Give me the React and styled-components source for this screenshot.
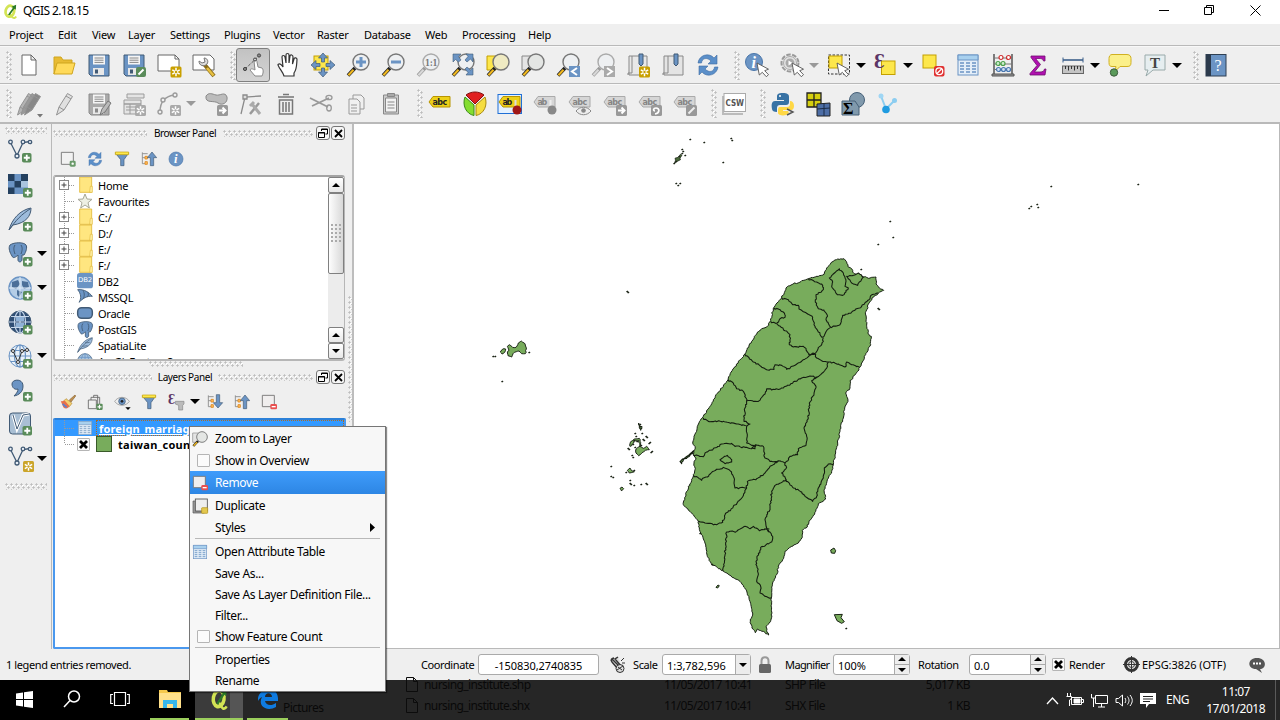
import React from "react";
import styled, { createGlobalStyle, css } from "styled-components";

const GlobalStyle = createGlobalStyle`
  * { box-sizing: border-box; }
  body { margin: 0; overflow: hidden; }
  svg { display: block; flex: none; overflow: visible; }
`;

const ui = `"Noto Sans", "Open Sans", sans-serif`;

/* ---------- shell ---------- */
const Desktop = styled.div`
  position: relative;
  display: flex;
  flex-direction: column;
  width: 1280px;
  height: 720px;
  overflow: hidden;
  background: #efefef;
  color: #000;
  font: 11px/16px ${ui};
  white-space: nowrap;
`;
const TitleBar = styled.header`
  display: flex;
  align-items: center;
  height: 24px;
  padding: 0 2px 0 3px;
  background: #fff;
  font-size: 12px;
  letter-spacing: -0.6px;
`;
const AppName = styled.span`flex: 1; padding: 0 0 1px 5px;`;
const WindowButton = styled.span`
  display: flex;
  justify-content: center;
  width: 45.5px;
  padding-bottom: 3px;
`;
const MenuBar = styled.nav`
  display: flex;
  align-items: center;
  height: 22px;
  padding: 1px 0 0 9px;
  border-bottom: 1px solid #b9b9b9;
  letter-spacing: -0.25px;
`;
const MenuName = styled.span`width: ${(p) => p.$w}px;`;

const dotsV = css`
  background-image: radial-gradient(circle at 1.5px 1.5px, #bdbdbd 0.9px, transparent 1.3px),
    radial-gradient(circle at 4.5px 3.5px, #bdbdbd 0.9px, transparent 1.3px),
    radial-gradient(circle at 2.5px 2.5px, #fff 0.9px, transparent 1.3px);
  background-size: 6px 5px;
`;
const dotsH = css`
  background-image: radial-gradient(circle at 1.5px 1.5px, #bdbdbd 0.9px, transparent 1.3px),
    radial-gradient(circle at 3.5px 4.5px, #bdbdbd 0.9px, transparent 1.3px),
    radial-gradient(circle at 2.5px 2.5px, #fff 0.9px, transparent 1.3px);
  background-size: 5px 6px;
`;
const ToolBar = styled.div`
  display: flex;
  align-items: center;
  height: ${(p) => p.$h}px;
  border-bottom: ${(p) => p.$line || 1}px solid #b9b9b9;
  border-top: 1px solid #f8f8f8;
`;
const Handle = styled.span`
  align-self: center;
  width: ${(p) => p.$w}px;
  height: 29px;
  background-clip: content-box;
  background-origin: content-box;
  padding-left: ${(p) => p.$w - 6}px;
  ${dotsV}
`;
const ToolSlot = styled.span`
  display: flex;
  align-items: center;
  justify-content: center;
  width: 35px;
  height: 34px;
  padding-right: 1px;
`;
const Pressed = styled.span`
  display: flex;
  align-items: center;
  justify-content: center;
  width: 34px;
  height: 34px;
  border: 1px solid #7f7f7f;
  border-radius: 3px;
  background: linear-gradient(#c2c2c2, #d4d4d4);
`;
const ArrowSlot = styled.span`
  display: flex;
  justify-content: center;
  width: ${(p) => p.$w || 12}px;
  padding-right: ${(p) => (p.$w ? 1 : 4)}px;
`;
const Triangle = styled.i`
  flex: none;
  width: 0;
  height: 0;
  border: ${(p) => p.$s || 5}px solid transparent;
  border-top: ${(p) => p.$s || 5}px solid ${(p) => p.$c || "#000"};
  border-bottom: 0;
  ${(p) => p.$up && css`border-top: 0; border-bottom: ${p.$s || 5}px solid #000;`}
`;

/* ---------- body ---------- */
const Body = styled.div`display: flex; height: 525px;`;
const SideBar = styled.aside`
  display: flex;
  flex-direction: column;
  width: 52px;
  padding-top: 3px;
  border-right: 1px solid #b9b9b9;
`;
const SideHandle = styled.span`
  width: 42px;
  height: 7px;
  margin: ${(p) => p.$gap || 0}px 0 0 5px;
  ${dotsH}
`;
const SideTool = styled.span`
  display: flex;
  align-items: center;
  height: 34.1px;
  padding-left: 8px;
  gap: 5px;
`;
const Dock = styled.section`
  display: flex;
  flex-direction: column;
  width: 295px;
  padding: 1px 0 0 1px;
`;
const Splitter = styled.div`
  width: 7px;
  border-right: 2px solid #bdbdbd;
  padding: 172px 0 0 1px;
  &::before { content: ""; display: block; height: 126px; width: 4px; ${dotsV} }
`;
const PanelTitle = styled.div`
  display: flex;
  align-items: center;
  height: 16px;
  font-size: 10px;
  letter-spacing: -0.4px;
`;
const TitleDots = styled.span`
  width: ${(p) => p.$w}px;
  height: 7px;
  ${dotsH}
`;
const TitleText = styled.span`width: ${(p) => p.$w}px; text-align: center;`;
const PanelButton = styled.span`
  display: flex;
  align-items: center;
  justify-content: center;
  width: 14px;
  height: 14px;
  margin-left: ${(p) => p.$gap || 0}px;
  border: 1px solid #777;
  border-radius: 3px;
  background: #f6f6f6;
`;
const PanelTools = styled.div`
  display: flex;
  align-items: center;
  height: ${(p) => p.$h}px;
  padding: ${(p) => p.$pt || 0}px 0 0 7px;
  gap: 11px;
`;
const BrowserFrame = styled.div`
  display: flex;
  width: 292px;
  height: 186px;
  border: 2px solid #b6b6b6;
  border-top-color: #a4a4a4;
  border-right-width: 1px;
  border-radius: 3px;
  background: #fff;
`;
const Tree = styled.div`
  flex: 1;
  overflow: hidden;
`;
const TreeRow = styled.div`
  display: flex;
  align-items: center;
  height: 16px;
  letter-spacing: -0.25px;
  & > span { padding: 2px 0 0 5px; }
`;
const ScrollBar = styled.div`
  display: flex;
  flex-direction: column;
  width: 16px;
  background: #ececec;
`;
const ScrollButton = styled.span`
  display: flex;
  align-items: center;
  justify-content: center;
  height: 16px;
  border: 1px solid #808080;
  border-radius: 2px;
  background: linear-gradient(#fff, #e8e8e8);
`;
const Thumb = styled.span`
  display: flex;
  align-items: center;
  justify-content: center;
  height: 81px;
  border: 1px solid #808080;
  border-radius: 2px;
  background: linear-gradient(90deg, #fdfdfd, #d8d8d8);
  margin-bottom: auto;
`;
const Grip = styled.i`
  width: 11px;
  height: 19px;
  background: radial-gradient(circle at 1px 1px, #aaa 0.8px, transparent 1.2px);
  background-size: 4px 4px;
`;
const MidHandle = styled.span`
  width: 94px;
  height: 6px;
  margin: 0 0 2px 96px;
  ${dotsH}
`;
const LayersFrame = styled.div`
  width: 293px;
  height: 231px;
  border: 2px solid #4a98ee;
  border-top-color: #2b80d8;
  border-radius: 2px;
  background: #fff;
`;
const LayerRow = styled.div`
  display: flex;
  align-items: center;
  height: 16px;
  font-weight: bold;
  font-size: 11px;
  letter-spacing: ${(p) => p.$ls || 0}px;
  ${(p) => p.$on && css`background: #3399ff; color: #fff;`}
`;
const LayerName = styled.span`
  flex: 1;
  height: 16px;
  line-height: 18px;
  margin-left: ${(p) => p.$ml}px;
  padding-left: 2px;
  text-decoration: ${(p) => (p.$u ? "underline" : "none")};
  ${(p) => p.$u && css`border: 1px dotted #b06a20; line-height: 16px;`}
`;
const CheckBox = styled.span`
  display: flex;
  flex: none;
  align-items: center;
  justify-content: center;
  width: 13px;
  height: 13px;
  border: 1px solid #b5b5b5;
  border-radius: 1px;
  background: #fbfbfb;
`;
const Swatch = styled.span`
  width: 16px;
  height: 16px;
  margin-left: 6px;
  border: 1px solid #3a5a2a;
  background: #78ac5c;
`;
const Canvas = styled.main`
  flex: 1;
  background: #fff;
  border: solid #b9b9b9;
  border-width: 0 1px 1px 0;
  overflow: hidden;
`;

/* ---------- status bar ---------- */
const StatusBar = styled.footer`
  display: flex;
  align-items: center;
  height: 31px;
  padding-left: 6px;
`;
const StatusText = styled.span`width: ${(p) => p.$w}px; letter-spacing: ${(p) => p.$ls || -0.4}px;`;
const Field = styled.span`
  display: flex;
  align-items: stretch;
  width: ${(p) => p.$w}px;
  height: 21px;
  margin-right: ${(p) => p.$gap}px;
  border: 1px solid #aaa;
  border-radius: 3px;
  background: #fff;
  line-height: 21px;
  letter-spacing: -0.05px;
  & > span:first-child { flex: 1; padding-left: ${(p) => (p.$align ? 0 : 4)}px; text-align: ${(p) => p.$align || "left"}; }
`;
const FieldButton = styled.span`
  display: flex;
  flex-direction: column;
  align-items: center;
  justify-content: ${(p) => (p.$spin ? "space-between" : "center")};
  width: 15px;
  padding: 2px 0;
  border-left: 1px solid #aaa;
  background: ${(p) => (p.$spin ? "linear-gradient(#eee 47%, #aaa 47%, #aaa 53%, #eee 53%)" : "#ececec")};
`;
const StatusIcon = styled.span`display: flex; justify-content: center; width: ${(p) => p.$w}px;`;

/* ---------- task bar ---------- */
const TaskBar = styled.footer`
  display: flex;
  height: 40px;
  background: #000;
  color: #fff;
`;
const TaskButton = styled.span`
  display: flex;
  flex: none;
  align-items: center;
  justify-content: center;
  width: ${(p) => p.$w}px;
  height: 40px;
  background: ${(p) => p.$bg || "transparent"};
  border-bottom: 2px solid ${(p) => p.$line || "transparent"};
`;
const TaskGlass = styled.div`
  display: flex;
  flex: 1;
  background: #262626;
  margin-left: -1px;
`;
const Ghost = styled.div`
  display: flex;
  flex: none;
  flex-direction: column;
  width: ${(p) => p.$w}px;
  height: 46px;
  margin-top: ${(p) => p.$mt || 0}px;
  margin-left: ${(p) => p.$ml || 0}px;
  padding-top: ${(p) => p.$pt || 0}px;
  color: #090909;
  font-size: 12px;
  line-height: 21px;
  letter-spacing: -0.6px;
`;
const GhostLine = styled.span`display: flex; align-items: center; justify-content: ${(p) => (p.$end ? "flex-end" : "flex-start")}; gap: 6px; height: 21px; flex: none;`;
const Tray = styled.div`
  display: flex;
  align-items: center;
  margin-left: auto;
  gap: 7px;
  font-size: 12px;
  letter-spacing: -0.5px;
`;
const Clock = styled.span`
  width: 72px;
  padding-right: 3px;
  text-align: right;
  line-height: 17px;
  & > b { display: block; font-weight: normal; padding-right: 15px; }
`;
const ShowDesktop = styled.span`width: 5px; height: 40px; border-left: 1px solid #5a5a5a;`;

/* ---------- context menu ---------- */
const ContextMenu = styled.div`
  position: absolute;
  left: 189px;
  top: 426px;
  width: 197px;
  height: 266px;
  padding-top: 1px;
  border: 1px solid #767676;
  background: #f7f7f7;
  box-shadow: 1px 1px 1px rgba(0, 0, 0, 0.45);
  font-size: 12px;
  letter-spacing: -0.36px;
`;
const MenuItem = styled.div`
  display: flex;
  align-items: center;
  height: ${(p) => p.$h}px;
  padding-right: 10px;
  ${(p) => p.$on && css`background: linear-gradient(#3f9cfb, #2d86e4); color: #fff;`}
`;
const MenuIcon = styled.span`display: flex; width: 25px; padding-left: ${(p) => p.$pl || 2}px;`;
const MenuLabel = styled.span`flex: 1;`;
const Separator = styled.div`
  height: 1px;
  margin: 0 5px;
  background: #b9b9b9;
`;

/* ---------- icon drawing ---------- */
const B = "#6b94c4", BD = "#415a75", Y = "#fde74c", YD = "#c4a000", G = "#9b9b9b";

const Plus = ({ x = 14, y = 14 }) => (
  <g transform={`translate(${x} ${y})`}>
    <rect width="9.5" height="9.5" rx="1.8" fill="#5a8c5a" />
    <path d="M4.75 1.8v6M1.8 4.75h6" stroke="#fff" strokeWidth="1.8" />
  </g>
);
const Star = ({ c = "#c9a000", x = 13, y = 13 }) => (
  <g transform={`translate(${x} ${y})`}>
    <rect width="11" height="11" rx="1.5" fill={c} />
    <path d="M5.5 1.3v8.4M1.8 3.4l7.4 4.2M1.8 7.6l7.4-4.2" stroke="#fff" strokeWidth="1.5" />
    <circle cx="5.5" cy="5.5" r="1.2" fill={c} />
  </g>
);
const Lens = ({ gray, fill = "#eef0f2", children }) => (
  <g>
    <path d="M9 15L2 22.5" stroke={gray ? "#999" : "#222"} strokeWidth="3.6" />
    <path d="M7.5 16.8L2.4 22.2" stroke={gray ? "#d8d8d8" : "#f0b820"} strokeWidth="2.2" />
    <circle cx="15" cy="9" r="8" fill={fill} stroke={gray ? "#aaa" : "#777"} strokeWidth="1.4" />
    {children}
  </g>
);
const Cursor = ({ x = 12, y = 10 }) => (
  <path transform={`translate(${x} ${y})`} d="M0 0l2.3 12 3-2.7 4 4.4 2.2-2-3.8-4 3.8-1.5z" fill="#fff" stroke="#555" strokeWidth=".9" />
);
const Tag = ({ on, text = "abc", children }) => (
  <g>
    <path d="M1 10l4-5.500h17v10.500H5z" fill={on ? "#edd018" : "#d6d6d6"} stroke={on ? "#b89500" : "#aaa"} />
    <text x="4.500" y="13" fontFamily="DejaVu Sans" fontWeight="bold" fontSize="8" textLength={text.length * 4.9} fill={on ? "#222" : "#858585"}>{text}</text>
    {children}
  </g>
);
const Floppy = ({ c = B, d = BD }) => (
  <g>
    <path d="M2 2h20v21H4l-2-2z" fill={c} stroke={d} />
    <path d="M6 2.500h12v9H6z" fill="#f5f5f5" />
    <path d="M7.500 5h9M7.500 7.200h9M7.500 9.400h9" stroke="#888" />
    <path d="M6 15h11v7H6z" fill="#e8e8e8" /><path d="M8 16.500h3v4H8z" fill={d} />
  </g>
);
const GrayBadge = ({ children }) => (<g><rect x="13" y="13" width="11" height="11" rx="1.500" fill="#999" />{children}</g>);
const Vee = () => (
  <g fill="none" stroke={BD} strokeWidth="1.300">
    <path d="M2.500 3.500L9 16.500 15 3.500l7-1" />
    <g fill="#e8eef5"><circle cx="2.500" cy="3" r="1.800" /><circle cx="9" cy="17" r="2" /><circle cx="15" cy="3" r="1.800" /><circle cx="22" cy="3" r="1.700" /></g>
  </g>
);
const Elephant = () => (
  <g fill={B} stroke={BD}>
    <path d="M2 3c4-3 14-3 16 0 1.500 2 0 7-2 10l-2 0v5c-1 3-4 2-4 0v-5c-2 2-5 4-6 1C2 11 0 6 2 3z" />
    <path d="M7 3c-2 3-1 6 0 9M13 3c2 3 1 6 0 9" fill="none" />
  </g>
);
const Globe = ({ dark, light }) => (
  <g>
    <circle cx="12" cy="12" r="11" fill={dark ? "#2e4d74" : light ? "#eaf1f8" : "#a9c4df"} stroke={light ? B : BD} />
    <g fill="none" stroke={dark ? "#c5d6ea" : B} strokeWidth="1.200"><ellipse cx="12" cy="12" rx="5.500" ry="11" /><path d="M1 12h22M3 6.500h18M3 17.500h18M12 1v22" /></g>
    {dark && <path d="M8 7h8v4H8zM8 13h8v4H8z" fill="#8fb1d6" />}
  </g>
);
const Sync = () => (
  <g fill="#5b8fc9" stroke="#3f6da3" strokeWidth=".6">
    <path d="M2 10C3 2 13-1 18 5l3-3v9h-9l3-3C11 4 6 5 5.500 10z" />
    <path d="M22 14c-1 8-11 11-16 5l-3 3v-9h9l-3 3c4 4 9 3 9.500-2z" />
  </g>
);
const Arr = ({ down }) => <path d={down ? "M14 1h5v12h4.500L16.500 21 9.500 13H14z" : "M14 22h5V10h4.500L16.500 1.500 9.500 10H14z"} fill={B} stroke={BD} />;
const TreeLines = () => (<g fill="none" stroke="#888" strokeWidth="1.300"><path d="M2 2v17h6M2 4h8M2 10h5" /><g fill="#ffc060" stroke="#e08a20"><path d="M6 8h3.500v4H6zM6 16h3.500v4H6z" /></g></g>);
const Table = ({ c = B }) => (
  <g><rect x="2" y="2" width="20" height="20" fill="#e4eef8" stroke={c} /><path d="M2 2h20v5H2z" fill="#a8d0ee" stroke={c} />
    <path d="M4 10h4M10 10h4M16 10h4M4 13h4M10 13h4M16 13h4M4 16h4M10 16h4M16 16h4M4 19h4M10 19h4M16 19h4" stroke={c} strokeWidth="1.300" /></g>
);
const Eps = () => <text x="0" y="14.500" fontFamily="DejaVu Serif" fontWeight="bold" fontSize="18" textLength="11" lengthAdjust="spacingAndGlyphs" fill="#5c3566">Ɛ</text>;
const QLogo = () => (
  <g>
    <ellipse cx="11" cy="11.500" rx="6.800" ry="8.800" fill="none" stroke="#d3e455" strokeWidth="4.400" transform="rotate(12 11 11.500)" />
    <path d="M10 15c3 1 4 6 6 7 2 1 4 0 5-2" fill="none" stroke="#d3e455" strokeWidth="3" />
    <path d="M8 17l8-11-2.500-1.500L21 1l-.5 8-2.200-1.600L10.500 18z" fill="#2b7a28" />
  </g>
);
const Pencil = ({ c = "#aaa", x = 0 }) => <path transform={`translate(${x} 0)`} d="M1.500 23L4 15 12.500 1.500l5 3L9 18zM4 15l5 3M11 4l5 3" fill={c} stroke="#939393" />;

const art = {
  q: <QLogo />,
  new: <path d="M5 2h9l5 5v15H5zM14 2v5h5" fill="#fff" stroke="#666" />,
  open: <g stroke="#cfa51e"><path d="M2 21V4h7l2 3h9v4H6z" fill="#e8bb33" /><path d="M2 21l3-11h18l-3 11z" fill="#ffda5a" /></g>,
  save: <Floppy />,
  saveas: <g><Floppy /><rect x="14" y="14" width="10" height="10" rx="2" fill="#5a8c5a" /><path d="M16.500 21.500l5-5" stroke="#fff" strokeWidth="2" /></g>,
  composer: <g><path d="M1 2h17l4 4v12H1z" fill="#fff" stroke="#666" /><path d="M18 2v4h4" fill="none" stroke="#666" /><Star x="13.500" y="13.500" /></g>,
  manager: <g><path d="M1 2h17l4 4v11H1z" fill="#fff" stroke="#666" /><path d="M12 11l10 12" stroke="#8a6d1a" strokeWidth="4" /><path d="M15 15l6.500 7.500" stroke="#e8c040" strokeWidth="2.500" /><path d="M7 8c0 5 5 6 8 3 2-3 0-6-3-6l1 4-3 1z" fill="#ddd" stroke="#777" /></g>,
  touch: <g><path d="M4 16L19 2" stroke="#555" strokeDasharray="3 1.500" /><path d="M13 8c1-2 3-1 3 1l1 5 4 1c2 2 1 6 0 8h-7l-5-6c1-2 3-1 5 0z" fill="#fff" stroke="#888" /><circle cx="18" cy="2.500" r="1.600" fill="#888" stroke="#444" /><circle cx="14" cy="6.500" r="1.500" fill="#ccc" stroke="#444" /><circle cx="4" cy="16" r="1.600" fill="#888" stroke="#444" /></g>,
  hand: <path d="M8 23C7 19 2 14 2 11.500c2-1.500 4 .5 5 2.500L6 4c0-2 2.500-2 3 0l1 6V2c0-2 3-2 3 0v8l1-7c.5-2 3-1 3 1l-.5 7 1.500-5c.5-2 3-1 3 .5C20.500 12 21 16 18 20v3z" fill="#fff" stroke="#333" strokeWidth="1.200" />,
  pansel: <g><rect x="3" y="3" width="14" height="14" fill={Y} stroke={YD} /><g fill={B} stroke={BD} strokeWidth=".7"><path d="M12 0l4.500 5h-3v4h-3V5h-3zM12 24l4.500-5h-3v-4h-3v4h-3zM0 12l5-4.500v3h4v3H5v3zM24 12l-5-4.500v3h-4v3h4v3z" /></g></g>,
  zin: <Lens><path d="M15 4v10M10 9h10" stroke={B} strokeWidth="3" /></Lens>,
  zout: <Lens><path d="M10 9h10" stroke={B} strokeWidth="3" /></Lens>,
  z11: <Lens gray><text x="9" y="12.500" fontFamily="DejaVu Serif" fontWeight="bold" fontSize="9" textLength="12.500" lengthAdjust="spacingAndGlyphs" fill="#777">1:1</text></Lens>,
  zfull: <g><Lens /><g fill={B} stroke={BD} strokeWidth=".6"><path d="M2 1h8L7.500 3.500 10 7 7.500 9 4.500 6.500 2 9zM22 1h-7l2 2.500L14 7l2 2 3.500-3L22 9zM22 22h-7l2-2.500-3-3.500 2-2 3.500 3L22 15z" /></g></g>,
  zsel: <g><path d="M1 3h9v14H1z" fill={Y} stroke={YD} /><Lens fill="#efeac2" /></g>,
  zlayer: <g><path d="M1 3h9v14H1z" fill="#e4e4e4" stroke="#888" /><Lens fill="#e4e6e4" /></g>,
  zlast: <g><Lens /><rect x="13" y="13" width="11" height="11" fill={B} /><path d="M21 15l-5 3.500 5 3.500" fill="none" stroke="#fff" strokeWidth="2" /></g>,
  znext: <g><Lens gray /><rect x="13" y="13" width="11" height="11" fill="#aaa" /><path d="M16 15l5 3.500-5 3.500" fill="none" stroke="#fff" strokeWidth="2" /></g>,
  bookNew: <g><path d="M3 3h18v19H3zM6 3v17H2v2" fill="#e8e8e8" stroke="#888" /><path d="M13 1h4v10l-2 2-2-2z" fill={B} stroke={BD} /><Star x="13" y="13.500" /></g>,
  book: <g><path d="M3 3h19v19H3zM7 3v17H2v2" fill="#e4e4e4" stroke="#888" /><path d="M13 1h4v10l-2 2-2-2z" fill={B} stroke={BD} /></g>,
  sync: <Sync />,
  identify: <g><circle cx="9" cy="9" r="8.500" fill={B} stroke="#4a76aa" /><text x="6.500" y="14.500" fontFamily="Liberation Serif" fontStyle="italic" fontWeight="bold" fontSize="16" fill="#fff">i</text><Cursor /></g>,
  info: <g><circle cx="12" cy="12" r="10.500" fill={B} stroke="#4a76aa" /><text x="9" y="18.500" fontFamily="Liberation Serif" fontStyle="italic" fontWeight="bold" fontSize="19" fill="#fff">i</text></g>,
  action: <g><circle cx="10" cy="10" r="8.500" fill="#e8e8e8" stroke="#999" strokeWidth="2" strokeDasharray="4.500 1.500" /><circle cx="10" cy="10" r="6.500" fill="#e4e4e4" stroke="#aaa" /><circle cx="10" cy="10" r="4.500" fill="#aaa" /><path d="M8.500 7.500l4 2.500-4 2.500z" fill="#fff" /><Cursor /></g>,
  select: <g><path d="M1.500 2h21v19h-21z" fill="none" stroke="#333" strokeDasharray="2.500 1.500" /><path d="M2 3h13v12H2z" fill={Y} stroke={YD} /><Cursor x="10" y="10" /></g>,
  eps: <g><rect x="7.500" y="8" width="13.500" height="13.500" fill={Y} stroke={YD} /><Eps /></g>,
  desel: <g><rect x="2" y="2" width="13" height="13" fill={Y} stroke={YD} /><rect x="13" y="13" width="10.500" height="10.500" rx="2" fill="#e03030" /><circle cx="18.300" cy="18.300" r="3.400" fill="none" stroke="#fff" strokeWidth="1.300" /><path d="M16 20.500l4.500-4.500" stroke="#fff" strokeWidth="1.300" /></g>,
  table: <Table />,
  abacus: <g><path d="M3 1v20M21 1v20" stroke="#555" strokeWidth="1.500" /><path d="M3 5h18M3 11h18M3 16.500h18" stroke="#777" /><path d="M1 21h22v2H1z" fill="#999" stroke="#555" /><g strokeWidth="1.200"><g fill="#fff" stroke="#d03030"><circle cx="10" cy="4.500" r="2" /><circle cx="17.500" cy="4.500" r="2" /></g><g fill="#cdeccd" stroke="#4aa04a"><circle cx="7" cy="10.500" r="2" /><circle cx="12" cy="10.500" r="2" /></g><g fill="#cfe0f4" stroke="#4a78b0"><circle cx="7.500" cy="16.500" r="2" /><circle cx="12.500" cy="16.500" r="2" /><circle cx="17.500" cy="16.500" r="2" /></g></g></g>,
  sigma: <path d="M5 3h14v5h-1.500C17 6 16 5.500 13 5.500H9.500l5 6-6 7.500H14c3 0 4-1 4.500-3H20l-1 6H4v-1.500L11 12.500 5 4.500z" fill="#b010b0" stroke="#701070" strokeWidth=".8" />,
  ruler: <g><path d="M2 7h20" stroke="#3b5f8a" strokeWidth="1.600" /><path d="M2 4.500v5M22 4.500v5" stroke="#3b5f8a" /><rect x="1.500" y="13" width="21" height="7.500" fill="#c4c4c4" stroke="#666" /><path d="M4.500 13v3M7.500 13v4.500M10.500 13v3M13.500 13v4.500M16.500 13v3M19.500 13v4.500" stroke="#333" /></g>,
  tip: <g><path d="M4 1.500h15c3 0 4 2 4 4v4c0 3-1 4-4 4h-7l-5 5 1-5H4c-2 0-3-1-3-4v-4c0-2 1-4 3-4z" fill="#fbf08a" stroke="#d0b020" /><circle cx="6" cy="19.500" r="3.700" fill="#5a9a5a" stroke="#3c5c3c" /></g>,
  annot: <g><path d="M2 2h20v15H10l-7 6 2-6H2z" fill="#e6eef0" stroke="#9aa" /><text x="7" y="14.500" fontFamily="Liberation Serif" fontWeight="bold" fontSize="15" fill="#444">T</text></g>,
  help: <g><rect x="2" y="1.500" width="20" height="21.500" fill={B} stroke="#2e3f52" /><path d="M2 1.500h5V23H2z" fill="#2b3a4c" /><text x="10.500" y="17.500" fontFamily="Liberation Serif" fontSize="16" fill="#fff">?</text></g>,
  edits: <g><Pencil c="#b4b4b4" x={-1} /><Pencil c="#999" x={2.5} /><Pencil c="#888" x={6} /><path d="M20 22h6l-3 3.500z" fill="#777" /></g>,
  edit: <Pencil c="#e0e0e0" x={3} />,
  gsave: <g><Floppy c="#aaa" d="#8a8a8a" /><path d="M13 23l2-6 6-8 3 2-6 9z" fill="#bbb" stroke="#777" /></g>,
  gadd: <g><path d="M5 2h17v4H5zM2 8h17v4H2zM2 12h17v10H2z" fill="#e4e4e4" stroke={G} /><path d="M4 15h13M4 18h13M8 12v10" stroke={G} /><Star c="#aaa" /></g>,
  gcurve: <g fill="none" stroke={G} strokeWidth="1.400"><path d="M3 20C3 10 8 4 18 3" /><g fill="#eee"><circle cx="3" cy="20" r="2" /><circle cx="6" cy="8" r="2" /><circle cx="18" cy="3" r="2" /></g><g stroke="none"><Star c="#aaa" /></g></g>,
  gmove: <g><path d="M2 4c3-4 6-2 10-1s9-4 11 2c1 6-5 9-9 6S1 12 2 4z" fill="#bcbcbc" stroke="#888" /><GrayBadge><path d="M15 18.500h5M18.500 15.500l3 3-3 3" stroke="#fff" strokeWidth="2" fill="none" /></GrayBadge></g>,
  gnode: <g stroke="#8a8a8a" fill="none" strokeWidth="1.300"><path d="M2 22L6 5l16-1" /><path d="M4 3h4v4H4z" fill="#ddd" /><path d="M11 22l9-11" strokeWidth="2.500" stroke="#999" /><path d="M13 12l8 10M11 14l4-4" strokeWidth="3" stroke="#aaa" /></g>,
  trash: <g fill="none" stroke="#777" strokeWidth="1.500"><path d="M4 5h16M9 2.500h6M5.500 8h13v14h-13zM9 10v10M12 10v10M15 10v10" /></g>,
  cut: <g fill="none" stroke="#999" strokeWidth="1.800"><path d="M1 6l18 9M3 14L20 6" /><ellipse cx="20" cy="5.500" rx="3" ry="2.200" strokeWidth="1.300" /><ellipse cx="20" cy="16" rx="2.300" ry="3" strokeWidth="1.300" /></g>,
  copy: <g fill="#f0f0f0" stroke="#999"><path d="M9 3h8l3 3v11H9z" /><path d="M5 7h8l3 3v12H5z" /><path d="M7 13h6M7 16h6M7 19h6" /></g>,
  paste: <g fill="#eee" stroke="#888"><path d="M4.500 3h15v19h-15z" fill="#ccc" /><path d="M6.500 6h11v14h-11z" fill="#f2f2f2" /><path d="M8.500 10h7M8.500 13h7M8.500 16h7" /><path d="M8.500 1.500h7v3h-7z" fill="#aaa" /></g>,
  label: <Tag on />,
  pie: <g stroke="#5a4a20" strokeWidth="1"><path d="M12 12L3 3c5-4 13-4 18 0z" fill="#e02020" stroke="#801010" /><path d="M11 13L2 5c-3 8 1 17 9 18.500z" fill="#84dd30" stroke="#3a8a18" /><path d="M13 13l9-8c3 8-1 17-9 18.500z" fill="#f5dd40" stroke="#a88a10" /></g>,
  pin: <g><rect x="0" y="2.500" width="23.500" height="19" fill="#e4f1ff" stroke="#1f6fd6" /><Tag on text="ab" /><path d="M17.500 14V8" stroke="#ddd" strokeWidth="2" /><circle cx="19" cy="18" r="4.500" fill="#a01818" /></g>,
  gpin: <Tag text="ab"><path d="M17.500 14V8" stroke="#eee" strokeWidth="2" /><circle cx="19" cy="18" r="4.500" fill="#888" /></Tag>,
  geye: <Tag><path d="M8 19c4-5 11-5 15 0-4 5-11 5-15 0z" fill="#eee" stroke="#888" /><circle cx="15.500" cy="18.500" r="2.300" fill="#888" /></Tag>,
  gtmove: <Tag><GrayBadge><path d="M15 18.500h5M18.500 15.500l3 3-3 3" stroke="#fff" strokeWidth="2" fill="none" /></GrayBadge></Tag>,
  gtrot: <Tag><GrayBadge><path d="M17 22c5-1 5-6 1-6-3 0-3 3-1 3" stroke="#fff" strokeWidth="1.700" fill="none" /></GrayBadge></Tag>,
  gtedit: <Tag><GrayBadge><path d="M15.500 21.500l6-6" stroke="#eee" strokeWidth="2" /></GrayBadge></Tag>,
  csw: <g><path d="M1 4v18h20" fill="none" stroke="#bbb" strokeWidth="2" /><rect x="2" y="1.500" width="21.500" height="18" fill="#fff" stroke="#aaa" /><text x="3.500" y="13.500" fontFamily="DejaVu Sans" fontSize="8.500" fontWeight="bold" textLength="18.500" lengthAdjust="spacingAndGlyphs" fill="#555">CSW</text></g>,
  python: <g><path d="M12 1c-5 0-6 1-6 4v3h7v1H4c-3 0-4 3-3 8 0 2 2 3 5 3v-4c0-2 1-3 3-3h6c2 0 3-1 3-3V5c0-3-2-4-6-4z" fill="#3772a4" /><path d="M19 9v3c0 2-1 3-3 3H9c-2 0-2 2-2 4v2c0 3 8 3 10 1 1-1 1-2 0-3h-5v-1h9c3-1 3-9-2-9z" fill="#ffd845" /><circle cx="9" cy="4" r="1" fill="#fff" /><path d="M16 17l6 3-6 3" fill="none" stroke="#555" strokeWidth="1.400" /></g>,
  grids: <g><path d="M1 1h14v14H1zM8 1v14M1 8h14" fill="#d5cf10" stroke="#222" strokeWidth="1.300" /><path d="M11 12l13-1v13H11z" fill="#4d6ea6" stroke="#222" /><path d="M18 11v13M11 17l13-1" stroke="#1a2a44" /></g>,
  sumi: <g><circle cx="16" cy="8" r="7.500" fill="#8099ac" stroke="#466078" /><path d="M1 9h13l4 6v8H1z" fill="#8099ac" stroke="#466078" /><text x="2" y="22" fontFamily="Liberation Serif" fontWeight="bold" fontSize="16" fill="#000">Σ</text></g>,
  topo: <g><path d="M5 4l5 13 8-8" fill="none" stroke="#8ccdf0" strokeWidth="2" /><circle cx="5" cy="4" r="2.500" fill="#9fd6f4" /><circle cx="18.500" cy="8.500" r="2.500" fill="#8ccdf0" /><circle cx="10" cy="17.500" r="3.800" fill="#1f9be0" /></g>,
  svec: <g><Vee /><Plus /></g>,
  sras: <g><path d="M0 1h20v20H0z" fill={B} /><path d="M0 1h6.500v7H0zM13 1h7v7h-7zM6.500 8H13v6.500H6.500zM0 14.500h6.500V21H0z" fill="#24405f" /><path d="M13 8h7v6.500h-7z" fill="#a9c4df" /><Plus x={15} y={15} /></g>,
  feather: <g><path d="M1 23C4 12 12 3 23 1c0 8-5 15-18 17z" fill="#9dbbdb" stroke={BD} /><path d="M1 23C8 13 14 7 22 2M8 14l8-1M12 9l7-1" fill="none" stroke={BD} /></g>,
  sfea: <g><path d="M1 23C4 12 12 3 23 1c0 8-5 15-18 17z" fill="#9dbbdb" stroke={BD} /><path d="M1 23C8 13 14 7 22 2" fill="none" stroke={BD} /><Plus x={15} y={15} /></g>,
  spg: <g><Elephant /><Plus x={15} y={15} /></g>,
  pg: <g transform="scale(1.250)"><Elephant /></g>,
  swms: <g><circle cx="12" cy="12" r="11" fill="#b4cde6" stroke={B} strokeWidth="1.400" /><path d="M4 6l6-2 2 4-4 5-4-2zM14 5l6 1 1 5-5 2-2-4zM9 14l5 2-3 5-2-2z" fill="#4b6f98" /><path d="M1 12h22M12 1v22" stroke="#dfeaf5" /><Plus x={15} y={15} /></g>,
  swcs: <g><Globe dark /><Plus x={15} y={15} /></g>,
  swfs: <g><Globe light /><path d="M5 7l5 11 4-11 5-1" stroke="#333" fill="none" /><circle cx="5" cy="7" r="1.500" fill="#fff" stroke="#333" /><circle cx="10" cy="18" r="1.500" fill="#fff" stroke="#333" /><circle cx="14" cy="7" r="1.500" fill="#fff" stroke="#333" /><circle cx="19" cy="6" r="1.500" fill="#fff" stroke="#333" /><Plus x={15} y={15} /></g>,
  scomma: <g><path d="M4 6c0-5 11-6 11 2 0 6-4 9-9 10 3-3 4-5 4-7-3 1-6-1-6-5z" fill={B} stroke={BD} /><Plus x={15} y={14} /></g>,
  svirt: <g><rect x="1.500" y="1" width="21" height="21" rx="3" fill="#a9bfd4" stroke={BD} /><path d="M5 3l4 14 6-14 6-1" stroke="#fff" strokeWidth="3" fill="none" /><path d="M5 3l4 14 6-14 6-1" stroke={BD} fill="none" /><Plus x={14.5} y={14} /></g>,
  snew: <g><Vee /><Star x={15} y={15} c="#cba52a" /></g>,
  badd: <g><path d="M2 2h18v18H2z" fill="#f2f2f2" stroke="#777" strokeWidth="1.400" /><rect x="14.500" y="14.500" width="9" height="9" rx="2" fill="#6a9a6a" /><circle cx="19" cy="19" r="1.800" fill="#fff" /></g>,
  filter: <g><path d="M2 3h20l-7 10v9h-5v-9z" fill={B} stroke={BD} /><path d="M2 1.500h20v4H2z" fill={Y} stroke={YD} /></g>,
  collapse: <g><TreeLines /><Arr /></g>,
  expand: <g><TreeLines /><Arr down /></g>,
  brush: <g><path d="M22.500 1.500L14 9l2.500 3 7-9z" fill="#c09050" stroke="#8a6430" /><path d="M9 7l9 7-4 5-9-8z" fill="#f5d070" stroke="#b08830" /><path d="M1 10c3 2 4-1 7 1l6 7c-1 4-6 5-9 2-1-3-2-5-4-10z" fill="#e8704a" /><path d="M4 15l6 5" stroke="#5a80d0" strokeWidth="2.500" /></g>,
  group: <g fill="none" stroke="#666" strokeWidth="1.300"><path d="M2 9h12v13H2zM6 9V5h13v12M10 5V2h6v14" /><g stroke="none"><Plus x={14} y={14.5} /></g></g>,
  eye: <g><path d="M1 11c5-8 17-8 22 0-5 8-17 8-22 0z" fill="#eee" stroke="#888" /><circle cx="12" cy="11" r="5" fill={B} stroke={BD} /><circle cx="12" cy="11" r="2" fill="#222" /><path d="M17 20h8l-4 4z" fill="#000" /></g>,
  epsf: <g><Eps /><path d="M11 11h13v4l-2 2v7h-6v-7l-5-2z" fill="#bbb" stroke="#888" /></g>,
  remove: <g><path d="M2 2h18v17H2z" fill="#f0eeee" stroke="#777" strokeWidth="1.400" /><rect x="14" y="15" width="10" height="8" rx="2" fill="#e85050" /><path d="M16 19h6" stroke="#fff" strokeWidth="2" /></g>,
  dup: <g><path d="M1.500 4.500h4V19h13v3.500h-17z" fill="#999" stroke="#555" /><rect x="5" y="1.500" width="18" height="18" fill="#eee" stroke="#555" strokeWidth="1.300" /><rect x="14.500" y="14.500" width="9" height="8.500" rx="1" fill="#e4c850" stroke="#b09010" /></g>,
  folder: <g><path d="M4 0h18v23H4z" fill="#ffe680" stroke="#e2b93c" strokeWidth="1.300" /><path d="M20 14h3v9h-4z" fill="#fff0a8" stroke="#e2b93c" /></g>,
  fav: <path d="M12 1.500l3 7.500 7.500.500-6 5 2 8-6.500-4.500L5.500 22.500l2-8-6-5L9 9z" fill="#eef0e4" stroke="#a8a898" strokeWidth="1.500" />,
  db2: <g><rect x="0" y="0" width="24" height="23" rx="4" fill={B} /><text x="1.500" y="14" fontFamily="DejaVu Sans" fontSize="10" textLength="21" lengthAdjust="spacingAndGlyphs" fill="#fff">DB2</text></g>,
  mssql: <path d="M1 1c10-1 17 4 22 10-8-1-14 3-20 9 4-6 3-13-2-19zM9 2c3 5 2 10 0 13M16 5c2 3 1 6-1 7" fill={B} stroke={BD} strokeWidth="1.300" />,
  oracle: <rect x="1" y="4" width="22" height="16" rx="6" fill={B} stroke={BD} strokeWidth="2.200" />,
  globe: <Globe />,
  gtable: <Table c="#7a9dc0" />,
};
const Svg = ({ n, s = 24 }) => (
  <svg width={s} height={s} viewBox="0 0 24 24">{art[n]}</svg>
);

const Branch = ({ kind, last }) => (
  <svg width="22" height="16" viewBox="0 0 22 16" fill="none" stroke="#999" strokeDasharray="1 1">
    <path d={last ? "M9.500 0v8" : "M9.500 0v16"} /><path d="M10 8.500h9" />
    {kind === "plus" && <g strokeDasharray="none"><rect x="4.500" y="3.500" width="9" height="9" fill="#fff" stroke="#888" /><path d="M6.500 8h5M9 5.500v5" stroke="#444" /></g>}
  </svg>
);
const Cross = ({ s = 9, w = 2.8 }) => <svg width={s} height={s} viewBox="0 0 9 9"><path d="M1 1l7 7M8 1L1 8" stroke="#000" strokeWidth={w} /></svg>;
const FloatGlyph = () => <svg width="10" height="10" viewBox="0 0 10 10" fill="none" stroke="#000"><path d="M3.500 3V1h6v5h-2M3 1.500h7" /><path d="M.500 4.500h6v5h-6zM0 5h7" /></svg>;

/* ---------- map ---------- */
const pts = (s) => s.trim().split(" ").map((p) => p.split(",").map(Number));
const rough = (s, closed, amp = 2.2) => {
  let seed = 7;
  const rnd = () => ((seed = (seed * 16807) % 2147483647) / 2147483647 - 0.5);
  const p = pts(s);
  if (closed) p.push(p[0]);
  const out = [p[0]];
  for (let i = 1; i < p.length; i++) {
    const [x0, y0] = p[i - 1], [x1, y1] = p[i];
    const n = Math.max(1, Math.round(Math.hypot(x1 - x0, y1 - y0) / 5));
    for (let k = 1; k < n; k++) out.push([x0 + ((x1 - x0) * k) / n + rnd() * amp * 1.6, y0 + ((y1 - y0) * k) / n + rnd() * amp * 1.6]);
    out.push([x1, y1]);
  }
  return "M" + out.map((q) => q.map((v) => v.toFixed(1)).join(" ")).join("L") + (closed ? "Z" : "");
};
const coast = "463,88 470,70 485,52 503,43 522,42 530,52 534,66 545,72 548,82 555,88 570,90 580,97 600,100 618,97 618,118 628,130 641,137 625,145 610,158 595,178 588,200 588,230 594,255 596,268 604,275 602,300 596,308 594,318 583,335 577,352 570,367 563,380 540,408 540,430 527,445 534,470 524,490 518,525 510,560 503,595 497,625 490,660 485,680 472,705 462,735 467,763 445,777 437,800 422,825 408,850 397,857 397,875 385,895 360,908 345,920 338,945 327,960 320,990 305,1027 304,1060 306,1105 302,1130 290,1143 290,1157 296,1171 280,1160 262,1153 256,1164 246,1150 241,1130 248,1105 240,1070 228,1035 210,1010 180,992 158,978 125,960 112,935 105,895 90,860 85,830 70,810 40,780 50,740 68,700 75,675 72,655 78,640 70,630 75,605 68,595 82,545 100,515 120,485 138,450 160,425 175,400 192,370 225,328 245,290 260,268 275,252 292,245 302,228 310,190 335,160 348,130 370,118 415,102 445,95";
const borders = [
  "415,102 440,112 458,122 460,135 438,150 436,172 445,192 462,196 472,212 468,225 482,248",
  "482,248 510,240 518,212 545,202 575,185 597,165 603,152 625,145",
  "335,160 355,165 368,180 385,182 387,193 418,210 428,218 432,240 445,262 456,278 462,275 472,255 482,248",
  "460,278 460,290 455,300 445,308 437,325 415,330",
  "313,190 330,195 343,205 345,218 330,222 320,235",
  "302,230 322,238 345,258 360,270 358,300 370,307 400,305 415,325 418,332 437,328",
  "225,328 250,352 290,375 312,374 315,360 335,362 350,374 375,362 400,345 418,335",
  "437,328 440,340 455,348 475,352 505,358 525,367 530,352 545,360 568,367",
  "475,352 470,370 452,390 442,397",
  "442,397 420,394 395,400 370,412 340,430 305,436 290,432 285,448 265,470 230,468",
  "175,405 190,415 200,432 220,440 228,460 230,468 225,490 222,530 240,538 230,545 230,595 245,602 258,602 255,612 245,610",
  "100,520 115,530 160,530 200,538 230,543",
  "442,397 425,408 438,425 428,455 418,475 415,520 402,550 410,575 408,602 385,612 383,630 360,635 345,655",
  "70,630 100,636 105,625 130,612 155,598 185,596 195,605 225,608 245,612 256,600 280,605 285,640 300,650 325,648 345,655",
  "345,655 350,668 335,685 348,705",
  "325,650 300,665 285,685 260,702 232,710 230,730 195,730 190,695 180,678 160,668 130,680 95,707 70,692",
  "230,730 215,760 190,785 165,810 158,833 140,840 105,835 85,830",
  "350,705 315,722 305,740 300,790 285,825 290,850 295,860",
  "348,705 370,730 395,742 405,755 428,770 440,755 445,730 460,700 463,670 475,658 490,660",
  "160,978 167,900 170,862 200,860 225,845 240,852 250,845 268,858 285,852 298,853",
  "295,855 308,875 305,892 272,908 258,950 265,990 260,1010 272,1025 270,1045 285,1055 304,1060",
];
const loops = [
  "150,645 160,638 172,632 185,645 185,652 165,657",
  "508,72 520,85 528,110 525,125 535,130 518,152 502,150 485,125 488,112 478,100",
  "530,95 550,92 565,85 580,97 568,112 563,122 545,115",
  "30,650 50,635 72,618 60,632 40,645 35,657",
];
const isles = [
  "82,200 88,195 98,203 108,203 115,190 124,184 133,190 139,208 136,222 125,222 117,214 103,218 95,232 84,228 82,220 87,212",
  "61,217 68,208 77,208 74,218 66,223",
  "476,430 480,442 486,440 482,452 478,445",
  "450,500 452,486 463,478 478,476 482,488 480,500 476,482 462,484 455,498",
  "468,508 480,500 490,506 500,500 508,510 496,512 484,522 476,528 468,520",
  "442,572 450,565 455,573 463,576 448,580",
  "420,626 426,622 431,627 425,634",
];
const specks = [[627, 292], [628, 293], [493, 357], [495, 357], [529, 353], [502, 382], [640, 425], [640, 427], [641, 429], [635, 434], [636, 437], [642, 434], [646, 437], [647, 438], [644, 441], [643, 440], [650, 443], [649, 444], [637, 442], [641, 446], [634, 441], [633, 445], [635, 448], [628, 449], [629, 450], [632, 456], [633, 458], [652, 452], [651, 453], [611, 467], [611, 477], [613, 478], [626, 473], [634, 471], [630, 481], [630, 484], [631, 485], [634, 486], [641, 485], [646, 484], [647, 485], [704, 143], [723, 163], [732, 141], [731, 139], [690, 140], [683, 152], [682, 154], [679, 157], [685, 156], [676, 162], [674, 164], [682, 150], [680, 184], [678, 186], [676, 184], [890, 222], [893, 238], [878, 245], [1051, 187], [1138, 185], [1031, 207], [1029, 209], [1038, 208], [1037, 205], [878, 309], [879, 310], [861, 270], [846, 629], [700, 534], [712, 565]];

const TaiwanMap = () => (
  <svg width="925" height="523" viewBox="354 124.300 925 523">
    <g transform="translate(670 245) scale(.33333)" fill="#78ac5c" stroke="#141c10" strokeWidth="2.900" strokeLinejoin="round">
      <path d={rough(coast, true, 2.4)} />
      <g strokeWidth="3.200">{loops.map((l) => <path key={l} d={rough(l, true)} />)}</g>
      <g fill="none" strokeWidth="3.200">{borders.map((b) => <path key={b} d={rough(b, false, 3)} />)}</g>
      <path d="M482 916l10-6 5 8-3 8-10-1zM493 1110l24-1-4 10 10 12-8 5-14-8zM138 1028l6-7 4 2-5 7z" />
    </g>
    <g transform="translate(480 280) scale(.33333)" fill="#78ac5c" stroke="#141c10" strokeWidth="2.800">
      {isles.map((l) => <path key={l} d={rough(l, true)} />)}
    </g>
    <path d="M675 158.500l3.500-1 2-3 1.500 1-2 3 .5 1.500-3 1.500-3 2 1-3z" fill="#4a6a3a" stroke="#141c10" strokeWidth=".7" />
    {specks.map(([x, y], i) => <path key={i} d={`M${x - 1} ${y - 0.3}l1.500-1 1 1.300-1.500 .8z`} fill="#1c2417" />)}
  </svg>
);

/* ---------- data ---------- */
const menus = [["Project", 49], ["Edit", 34], ["View", 36], ["Layer", 42], ["Settings", 54], ["Plugins", 49], ["Vector", 44], ["Raster", 47], ["Database", 61], ["Web", 37], ["Processing", 66], ["Help", 40]];
const bar1 = ["|12", "new", "open", "save", "saveas", "composer", "manager", "|14", "*touch", "hand", "pansel", "zin", "zout", "z11", "zfull", "zsel", "zlayer", "zlast", "znext", "bookNew", "book", "sync", "|14", "identify", "action", ">g", "select", ">", "eps", ">", "desel", "table", "abacus", "sigma", "ruler", ">", "tip", "annot", ">", "|14", "help"];
const bar2 = ["|12", "edits", "edit", "gsave", "gadd", "gcurve", ">g", "gmove", "gnode", "trash", "cut", "copy", "paste", "|14", "label", "pie", "pin", "gpin", "geye", "gtmove", "gtrot", "gtedit", "|14", "csw", "|14", "python", "grids", "sumi", "topo"];
const side = [["svec"], ["sras"], ["sfea"], ["spg", 1], ["swms", 1], ["swcs"], ["swfs", 1], ["scomma"], ["svirt"], ["snew", 1]];
const tree = [["folder", "Home", 1], ["fav", "Favourites"], ["folder", "C:/", 1], ["folder", "D:/", 1], ["folder", "E:/", 1], ["folder", "F:/", 1], ["db2", "DB2"], ["mssql", "MSSQL"], ["oracle", "Oracle"], ["pg", "PostGIS"], ["feather", "SpatiaLite"], ["globe", "ArcGisFeatureServer"]];

const Tools = ({ items }) => items.map((t, i) => {
  if (t[0] === "|") return <Handle key={i} $w={+t.slice(1)} />;
  if (t[0] === ">") return <ArrowSlot key={i}><Triangle $c={t[1] ? "#999" : "#000"} /></ArrowSlot>;
  if (t[0] === "*") return <ToolSlot key={i}><Pressed><Svg n={t.slice(1)} /></Pressed></ToolSlot>;
  return <ToolSlot key={i}><Svg n={t} /></ToolSlot>;
});

const Title = ({ left, text, w, right }) => (
  <PanelTitle>
    <TitleDots $w={left} /><TitleText $w={w}>{text}</TitleText><TitleDots $w={right} />
    <PanelButton $gap={3}><FloatGlyph /></PanelButton><PanelButton $gap={1}><Cross w={1.8} /></PanelButton>
  </PanelTitle>
);
const Item = ({ icon, check, h, on, sub, children }) => (
  <MenuItem $h={h} $on={on}>
    <MenuIcon $pl={check ? 7 : 2}>{icon && <Svg n={icon} s={16} />}{check && <CheckBox />}</MenuIcon>
    <MenuLabel>{children}</MenuLabel>
    {sub && <svg width="5" height="9"><path d="M0 0l5 4.500L0 9z" /></svg>}
  </MenuItem>
);
const File = () => <svg width="12" height="15" viewBox="0 0 12 15" fill="none" stroke="#0c0c0c"><path d="M.500.500h7l4 4v10h-11zM7.500.500v4h4" /></svg>;

export default function App() {
  return (
    <Desktop>
      <GlobalStyle />
      <TitleBar>
        <Svg n="q" s={15} /><AppName>QGIS 2.18.15</AppName>
        <WindowButton><svg width="11" height="11"><path d="M0 5.500h10" stroke="#000" /></svg></WindowButton>
        <WindowButton><svg width="11" height="11" fill="none" stroke="#000"><path d="M.500 2.500h7v7h-7zM2.500 2V.500h7v7H8" /></svg></WindowButton>
        <WindowButton><svg width="11" height="11"><path d="M.500.500l10 10M10.500.500l-10 10" stroke="#000" /></svg></WindowButton>
      </TitleBar>
      <MenuBar>{menus.map(([m, w]) => <MenuName key={m} $w={w}>{m}</MenuName>)}</MenuBar>
      <ToolBar $h={39}><Tools items={bar1} /></ToolBar>
      <ToolBar $h={40} $line={2}><Tools items={bar2} /></ToolBar>
      <Body>
        <SideBar>
          <SideHandle />
          {side.map(([n, a]) => <SideTool key={n}><Svg n={n} />{a && <Triangle />}</SideTool>)}
          <SideHandle $gap={8} />
        </SideBar>
        <Dock>
          <Title left={94} text="Browser Panel" w={76} right={90} />
          <PanelTools $h={34} $pt={1}>{["badd", "sync", "filter", "collapse", "info"].map((n) => <Svg key={n} n={n} s={16} />)}</PanelTools>
          <BrowserFrame>
            <Tree>
              {tree.map(([icon, name, p]) => (
                <TreeRow key={name}><Branch kind={p ? "plus" : ""} /><Svg n={icon} s={16} /><span>{name}</span></TreeRow>
              ))}
            </Tree>
            <ScrollBar>
              <ScrollButton><Triangle $up $s={4} /></ScrollButton>
              <Thumb><Grip /></Thumb>
              <ScrollButton><Triangle $up $s={4} /></ScrollButton>
              <ScrollButton><Triangle $s={4} /></ScrollButton>
            </ScrollBar>
          </BrowserFrame>
          <MidHandle />
          <Title left={99} text="Layers Panel" w={66} right={95} />
          <PanelTools $h={33}>
            {["brush", "group", "eye", "filter"].map((n) => <Svg key={n} n={n} s={16} />)}
            <Svg n="epsf" s={16} /><ArrowSlot $w={1}><Triangle /></ArrowSlot>
            {["expand", "collapse", "remove"].map((n) => <Svg key={n} n={n} s={16} />)}
          </PanelTools>
          <LayersFrame>
            <LayerRow $on $ls={0.15}><Branch /><Svg n="gtable" s={16} /><LayerName $u $ml={3}>foreign_marriage</LayerName></LayerRow>
            <LayerRow $ls={0.3}><Branch last /><CheckBox><Cross /></CheckBox><Swatch /><LayerName $ml={4}>taiwan_county</LayerName></LayerRow>
          </LayersFrame>
        </Dock>
        <Splitter />
        <Canvas><TaiwanMap /></Canvas>
      </Body>
      <StatusBar>
        <StatusText $w={415}>1 legend entries removed.</StatusText>
        <StatusText $w={57}>Coordinate</StatusText>
        <Field $w={121} $gap={4} $align="center"><span>-150830,2740835</span></Field>
        <StatusIcon $w={30}>
          <svg width="18" height="18" viewBox="0 0 18 18" fill="#ddd" stroke="#333"><path d="M5 2c-2 0-4 2-2 4l6 7M9 1L6 3l6 7M3 3l8 8" strokeWidth="1.500" /><circle cx="11" cy="12.500" r="4" /><path d="M8 14l6-4M12 5l3-3M13 7h3M9 11l4 3" /></svg>
        </StatusIcon>
        <StatusText $w={29}>Scale</StatusText>
        <Field $w={89} $gap={4}><span>1:3,782,596</span><FieldButton><Triangle $s={4} /></FieldButton></Field>
        <StatusIcon $w={20}>
          <svg width="14" height="18" viewBox="0 0 14 18"><path d="M3.500 9V5c0-5 7-5 7 0v4" fill="none" stroke="#999" strokeWidth="2" /><rect x="1" y="8" width="12" height="9" rx="1.500" fill="#666" /></svg>
        </StatusIcon>
        <StatusText $w={10} /><StatusText $w={48} $ls={-0.6}>Magnifier</StatusText>
        <Field $w={77} $gap={8}><span>100%</span><FieldButton $spin><Triangle $up $s={4} /><Triangle $s={4} /></FieldButton></Field>
        <StatusText $w={51}>Rotation</StatusText>
        <Field $w={77} $gap={6}><span>0.0</span><FieldButton $spin><Triangle $up $s={4} /><Triangle $s={4} /></FieldButton></Field>
        <CheckBox><Cross /></CheckBox>
        <StatusText $w={4} /><StatusText $w={54} $ls={-0.25}>Render</StatusText>
        <svg width="17" height="17" viewBox="0 0 17 17" fill="#eee" stroke="#333"><circle cx="8.500" cy="8.500" r="6" strokeWidth="3" /><circle cx="8.500" cy="8.500" r="3" /><path d="M8.500 0v17M0 8.500h17" /></svg>
        <StatusText $w={2} /><StatusText $w={107} $ls={-0.05}>EPSG:3826 (OTF)</StatusText>
        <svg width="16" height="16" viewBox="0 0 16 16"><path d="M8 1c10 0 10 11 3 11l2 4-6-4C-2 12-2 1 8 1z" fill="#555" /><path d="M4 6.500h2M7 6.500h2M10 6.500h2" stroke="#fff" strokeWidth="1.800" /></svg>
      </StatusBar>
      <TaskBar>
        <TaskButton $w={48}><svg width="17" height="17" viewBox="0 0 17 17"><path d="M0 2.500L7 1.500V8H0zM8 1.300L17 0v8H8zM0 9h7v6.500l-7-1zM8 9h9v8l-9-1.300z" fill="#fff" /></svg></TaskButton>
        <TaskButton $w={48}><svg width="18" height="18" fill="none" stroke="#fff" strokeWidth="1.500"><circle cx="11" cy="6.500" r="5.500" /><path d="M7 10.500L1 17" /></svg></TaskButton>
        <TaskButton $w={48}><svg width="20" height="16" fill="none" stroke="#fff" strokeWidth="1.200"><path d="M4.500 1.500h11v13h-11zM3 3.500H.700v9H3M17 3.500h2.300v9H17" /></svg></TaskButton>
        <TaskButton $w={6} />
        <TaskButton $w={40} $line="#9bce5c"><svg width="22" height="20" viewBox="0 0 22 20"><path d="M0 1h8l1 2h13v16H0z" fill="#f5c84c" /><path d="M0 4h22v15H0z" fill="#ffe08a" /><path d="M4 19v-8h14v8h-4v-4H8v4z" fill="#35b6ea" /></svg></TaskButton>
        <TaskGlass>
          <TaskButton $w={6} $bg="#000" />
          <TaskButton $w={48} $bg="linear-gradient(90deg, #3b3b3b 72%, #555 72%)" $line="#9bce5c"><svg width="19" height="22" viewBox="0 0 24 24" preserveAspectRatio="none">{art.q}</svg></TaskButton>
          <TaskButton $w={4} />
          <TaskButton $w={41} $line="#9bce5c"><svg width="20" height="20" viewBox="0 0 20 20"><path d="M0 9C2-2 19-4 20 9v3H7c1 5 7 5 11 2v4C10 23-1 18 4 8c-2 1-3 2-4 4zM7 8h7c0-5-7-5-7 0z" fill="#0f7be0" fillRule="evenodd" /></svg></TaskButton>
          <Ghost $w={124} $pt={17} $ml={-5}><GhostLine>Pictures</GhostLine></Ghost>
          <Ghost $w={258} $mt={-6} $ml={-1}><GhostLine><File />nursing_institute.shp</GhostLine><GhostLine><File />nursing_institute.shx</GhostLine></Ghost>
          <Ghost $w={121} $mt={-6}><GhostLine>11/05/2017 10:41</GhostLine><GhostLine>11/05/2017 10:41</GhostLine></Ghost>
          <Ghost $w={90} $mt={-6}><GhostLine>SHP File</GhostLine><GhostLine>SHX File</GhostLine></Ghost>
          <Ghost $w={95} $mt={-6}><GhostLine $end>5,017 KB</GhostLine><GhostLine $end>1 KB</GhostLine></Ghost>
          <Tray>
            <svg width="13" height="9" fill="none" stroke="#fff" strokeWidth="1.300"><path d="M1 8l5.500-6L12 8" /></svg>
            <svg width="18" height="14" fill="none" stroke="#fff"><path d="M5.500 4.500h10v7h-10zM16 6.500h1.500v3H16M1.500 0v3M4.500 0v3M.500 3.500h5v2l-2 1.500v6" /><path d="M8 6h6v4H8z" fill="#fff" /></svg>
            <svg width="17" height="15" fill="none" stroke="#fff"><path d="M4.500 2.500h12v8h-12zM10.500 11v3M7 14h7M.500 1v4h4M2.500 5v9" /></svg>
            <svg width="18" height="15" fill="none" stroke="#fff"><path d="M1 5.500h2.500L7.500 2v11L3.500 9.500H1zM10 5c1 2 1 3 0 5M12.500 3.500c2 3 2 5 0 8M15 2c3 4 3 7 0 11" /></svg>
            <svg width="16" height="15"><path d="M0 0h16v11H9l-3 4v-4H0z" fill="#fff" /><path d="M3 3.500h10M3 6h10M3 8.500h7" stroke="#222" /></svg>
            <span>&nbsp;ENG</span>
            <Clock><b>11:07</b>17/01/2018</Clock>
            <ShowDesktop />
          </Tray>
        </TaskGlass>
      </TaskBar>
      <ContextMenu>
        <Item h={22} icon="zlayer">Zoom to Layer</Item>
        <Item h={21} check>Show in Overview</Item>
        <Item h={23} icon="remove" on>Remove</Item>
        <Item h={23} icon="dup">Duplicate</Item>
        <Item h={21} sub>Styles</Item>
        <Separator />
        <Item h={25} icon="table">Open Attribute Table</Item>
        <Item h={20}>Save As...</Item>
        <Item h={21}>Save As Layer Definition File...</Item>
        <Item h={21}>Filter...</Item>
        <Item h={21} check>Show Feature Count</Item>
        <Separator />
        <Item h={23}>Properties</Item>
        <Item h={20}>Rename</Item>
      </ContextMenu>
    </Desktop>
  );
}
